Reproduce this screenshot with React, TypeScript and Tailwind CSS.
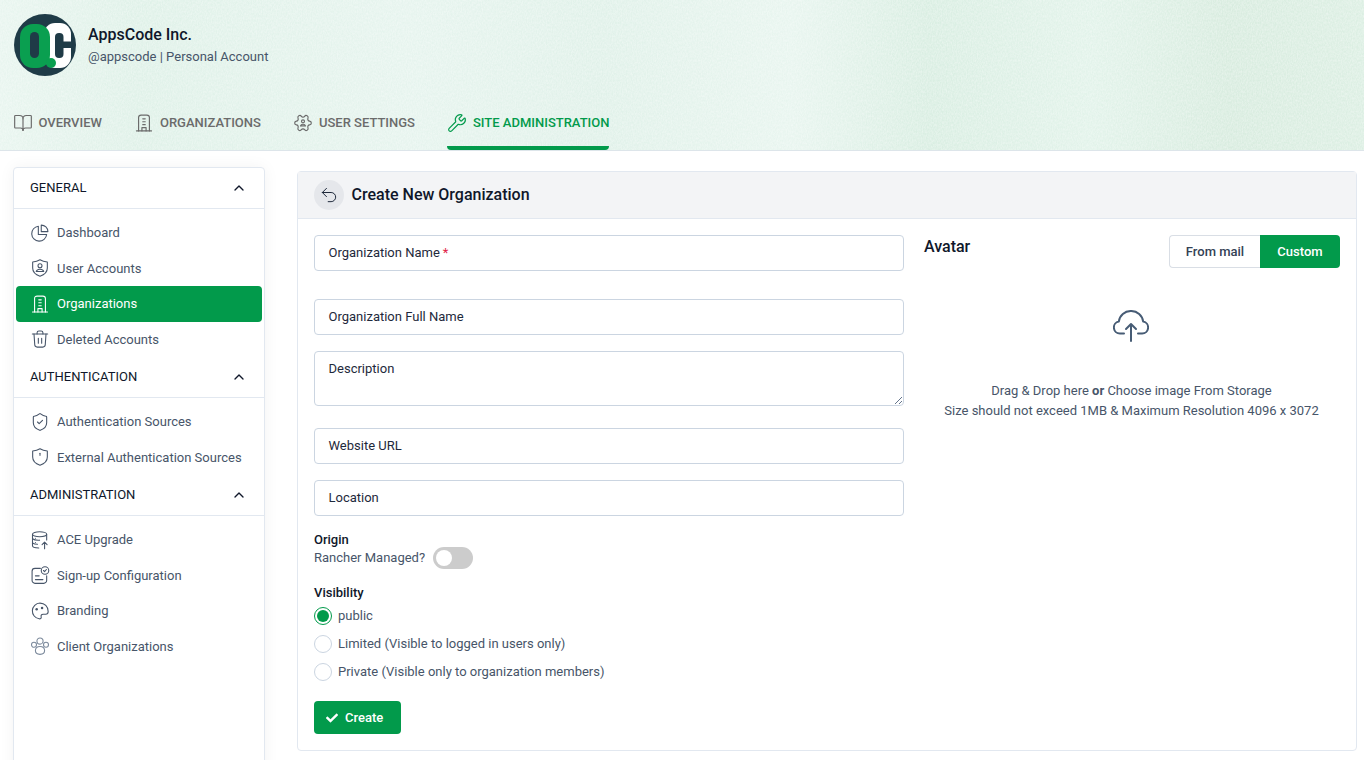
import { BookOpen, ChevronUp, ShieldCheck, Undo2, Wrench } from 'lucide-react';
import { FaCheck } from 'react-icons/fa';
import type { ReactNode } from 'react';

type IconProps = { className?: string; strokeWidth?: number };

function Svg({ className, strokeWidth = 1.5, children }: IconProps & { children: ReactNode }) {
  return (
    <svg viewBox="0 0 24 24" fill="none" stroke="currentColor" strokeWidth={strokeWidth} strokeLinecap="round" strokeLinejoin="round" className={className}>
      {children}
    </svg>
  );
}

function Logo() {
  return (
    <svg viewBox="0 0 62 62" className="h-[62px] w-[62px] shrink-0">
      <circle cx="31" cy="31" r="31" fill="#1f3b47" />
      {/* white C */}
      <rect x="30" y="9" width="27" height="45" rx="11" fill="#fff" />
      <rect x="41" y="27.5" width="16" height="6.5" fill="#1f3b47" />
      <rect x="41" y="19" width="8.5" height="25" rx="4" fill="#1f3b47" />
      {/* green Q */}
      <rect x="6" y="10" width="30" height="44" rx="13" fill="#0a9f50" />
      <circle cx="37" cy="49" r="5" fill="#0a9f50" />
      <rect x="16" y="18" width="9" height="26" rx="4.5" fill="#1f3b47" />
    </svg>
  );
}

function BuildingIcon(props: IconProps) {
  return (
    <Svg {...props}>
      <path d="M5.5 21.5V5.5C5.5 3.5 6.8 2.5 8.5 2.5h7c1.7 0 3 1 3 3v16" />
      <path d="M3 21.5h18" />
      <path d="M9.5 21.5v-4h5v4" />
      <path d="M10.5 7h3M10.5 10.5h3M10.5 14h3" />
    </Svg>
  );
}

function GearUserIcon(props: IconProps) {
  return (
    <Svg {...props}>
      <path
        transform="rotate(90 12 12)"
        d="M9.671 4.136a2.34 2.34 0 0 1 4.659 0 2.34 2.34 0 0 0 3.319 1.915 2.34 2.34 0 0 1 2.33 4.033 2.34 2.34 0 0 0 0 3.831 2.34 2.34 0 0 1-2.33 4.033 2.34 2.34 0 0 0-3.319 1.915 2.34 2.34 0 0 1-4.659 0 2.34 2.34 0 0 0-3.32-1.915 2.34 2.34 0 0 1-2.33-4.033 2.34 2.34 0 0 0 0-3.831A2.34 2.34 0 0 1 6.35 6.051a2.34 2.34 0 0 0 3.32-1.915"
      />
      <circle cx="12" cy="10" r="1.8" />
      <path d="M9 15.5c.4-1.3 1.5-2 3-2s2.6.7 3 2z" />
    </Svg>
  );
}

function PieIcon(props: IconProps) {
  return (
    <Svg {...props}>
      <path d="M10 3.8a9 9 0 1 0 10 10H10z" />
      <path d="M13.5 2.5v7.800h8a8 8 0 0 0-8-7.800z" />
    </Svg>
  );
}

function ShieldUserIcon(props: IconProps) {
  return (
    <Svg {...props}>
      <path d="M12 2.2c2.500 1.500 5.200 2.300 8.800 2.500v7.300c0 4.800-3.600 8.100-8.800 9.800-5.200-1.700-8.800-5-8.800-9.800V4.700c3.600-.2 6.300-1 8.800-2.500z" />
      <circle cx="12" cy="9.3" r="2.4" />
      <path d="M7.5 16.2c.5-1.800 2.400-2.700 4.500-2.700s4 .9 4.500 2.700z" />
    </Svg>
  );
}

function ShieldDotIcon(props: IconProps) {
  return (
    <Svg {...props}>
      <path d="M12 2.2c2.500 1.500 5.200 2.300 8.800 2.500v7.300c0 4.800-3.600 8.100-8.800 9.800-5.200-1.700-8.800-5-8.800-9.800V4.700c3.600-.2 6.300-1 8.800-2.500z" />
      <path d="M12 7.5V10" />
    </Svg>
  );
}

function TrashIcon(props: IconProps) {
  return (
    <Svg {...props}>
      <path d="M2.800 6h18.400" />
      <path d="M8.500 6V4.500c0-1.300.9-2.200 2.200-2.200h2.600c1.300 0 2.200.9 2.200 2.200V6" />
      <path d="M4.800 6l.9 13c.1 1.700 1.300 2.700 2.900 2.700h6.800c1.600 0 2.800-1 2.900-2.700l.9-13" />
      <path d="M10 11v6M14 11v6" />
    </Svg>
  );
}

function DbIcon(props: IconProps) {
  return (
    <Svg {...props}>
      <ellipse cx="11.5" cy="5" rx="8.5" ry="3" />
      <path d="M3 5v14c0 1.500 2.600 2.500 7.500 2.600M20 5v7" />
      <path d="M3 10.500c1.600 1.300 5 1.900 8.500 1.700M3 15.500c1.600 1 3.600 1.500 6 1.500" />
      <path d="M6.500 9.800h.01M6.500 15h.01" />
      <path d="M17.500 22.500v-8M14.500 17.500l3-3 3 3" />
    </Svg>
  );
}

function SignupIcon(props: IconProps) {
  return (
    <Svg {...props}>
      <path d="M12.500 4H6a3.500 3.500 0 0 0-3.500 3.500v11A3.500 3.500 0 0 0 6 22h10.500a3.500 3.500 0 0 0 3.500-3.500V13" />
      <path d="M6.500 13H11M6.500 17.500h9" />
      <circle cx="18" cy="6.5" r="4.5" />
      <path d="M16.200 6.600l1.300 1.300 2.200-2.500" />
    </Svg>
  );
}

function PaletteIcon(props: IconProps) {
  return (
    <Svg {...props}>
      <path d="M12 2.500a9.500 9.500 0 0 0-1 18.900c1.800.2 2.800-.9 2.400-2.400-.5-1.800.6-3.200 2.300-3.200h3.100c1.800 0 3-1.300 3-3.300C21.800 6.800 17.500 2.500 12 2.500z" />
      <circle cx="8" cy="10" r="1.5" fill="currentColor" stroke="none" />
      <circle cx="14.5" cy="8.5" r="1.5" fill="currentColor" stroke="none" />
    </Svg>
  );
}

function PeopleIcon(props: IconProps) {
  return (
    <Svg {...props}>
      <circle cx="12" cy="6" r="3.7" />
      <circle cx="4.8" cy="10.500" r="3" />
      <circle cx="19.2" cy="10.500" r="3" />
      <path d="M6.500 17.500c0-3.500 2.500-5 5.500-5s5.500 1.500 5.500 5-2.500 4.500-5.500 4.500-5.500-1-5.500-4.500z" />
    </Svg>
  );
}

function UploadCloud() {
  return (
    <svg viewBox="0 0 36 32" fill="none" stroke="currentColor" strokeWidth="2" strokeLinecap="round" strokeLinejoin="round" className="-ml-[1px] h-8 w-9 text-[#475c75]">
      <path d="M11 23.500H7a6 6 0 0 1-1.200-11.900A12 12 0 0 1 18 1a12 12 0 0 1 12.200 10.600A6 6 0 0 1 29 23.500H25" />
      <path d="M18 31V14M13 19l5-5 5 5" />
    </svg>
  );
}

const groups = [
  {
    title: 'GENERAL',
    items: [
      { label: 'Dashboard', Icon: PieIcon },
      { label: 'User Accounts', Icon: ShieldUserIcon },
      { label: 'Organizations', Icon: BuildingIcon, active: true },
      { label: 'Deleted Accounts', Icon: TrashIcon },
    ],
  },
  {
    title: 'AUTHENTICATION',
    items: [
      { label: 'Authentication Sources', Icon: ShieldCheck },
      { label: 'External Authentication Sources', Icon: ShieldDotIcon },
    ],
  },
  {
    title: 'ADMINISTRATION',
    items: [
      { label: 'ACE Upgrade', Icon: DbIcon },
      { label: 'Sign-up Configuration', Icon: SignupIcon },
      { label: 'Branding', Icon: PaletteIcon },
      { label: 'Client Organizations', Icon: PeopleIcon, muted: true },
    ],
  },
];

const tabs = [
  { label: 'OVERVIEW', Icon: BookOpen },
  { label: 'ORGANIZATIONS', Icon: BuildingIcon },
  { label: 'USER SETTINGS', Icon: GearUserIcon },
  { label: 'SITE ADMINISTRATION', Icon: Wrench, active: true },
];

function Field({ label, required }: { label: string; required?: boolean }) {
  return (
    <div className="flex h-9 items-center rounded border border-[#cbd5e1] bg-white pl-[13.5px] text-[13px] text-[#1e293b]">
      {label}
      {required && <span className="ml-[3px] text-[#e11d48]">*</span>}
    </div>
  );
}

function Radio({ label, checked }: { label: string; checked?: boolean }) {
  return (
    <div className="flex h-7 items-center gap-[6px] text-[13px] text-[#475569]">
      <span className={`flex h-[18px] w-[18px] items-center justify-center rounded-full border ${checked ? 'border-[#029a4b]' : 'border-[#cbd5e1]'}`}>
        {checked && <span className="h-3 w-3 rounded-full bg-[#029a4b]" />}
      </span>
      {label}
    </div>
  );
}

export default function App() {
  return (
    <div className="h-[760px] w-[1364px] overflow-hidden bg-white font-['Roboto',sans-serif]">
      {/* Header */}
      <header className="relative h-[151px] border-b border-[#dde5ea] bg-[linear-gradient(90deg,#e8f5ef_0%,#dff1e8_10%,#e6f4ee_30%,#e0f1e9_44%,#e8f5ef_58%,#d9eee2_68%,#e2f3ea_80%,#d8ecdf_90%,#dcefe3_100%)]">
        <svg className="absolute inset-0 h-full w-full opacity-[0.4]" aria-hidden="true">
          <filter id="grain">
            <feTurbulence type="fractalNoise" baseFrequency="0.8 0.45" numOctaves="2" />
            <feColorMatrix values="0 0 0 0 1  0 0 0 0 1  0 0 0 0 1  1.6 0 0 0 -0.4" />
          </filter>
          <rect width="100%" height="100%" filter="url(#grain)" />
        </svg>
        <div className="relative flex items-center gap-3 pl-[14px] pt-[14px]">
          <Logo />
          <div>
            <h1 className="text-base leading-[22px] font-medium text-[#0f172a]">AppsCode Inc.</h1>
            <p className="mt-[1px] text-[13px] leading-5 text-[#475569]">@appscode | Personal Account</p>
          </div>
        </div>
        <nav className="absolute bottom-0 left-[12.5px] flex gap-8">
          {tabs.map(({ label, Icon, active }) => (
            <div key={label} className={`flex h-[47px] items-center gap-[6px] border-b-4 pb-1 text-[13px] font-medium ${active ? 'rounded-b-sm border-[#029a4b] text-[#029a4b]' : 'border-transparent text-[#6b6b6b]'}`}>
              <Icon className="h-5 w-5" strokeWidth={1.4} />
              {label}
            </div>
          ))}
        </nav>
      </header>

      <div className="flex items-start gap-8 px-[13px] pt-4">
        {/* Sidebar */}
        <aside className="h-[640px] w-[252px] shrink-0 rounded border border-[#e2e8f0] bg-white shadow-[0_0_16px_rgba(15,23,42,0.05)]">
          {groups.map((group) => (
            <div key={group.title}>
              <div className="flex h-[41px] items-center justify-between border-b border-[#e2e8f0] pb-[1px] pl-4 pr-[17px] text-[13px] text-[#0f172a]">
                {group.title}
                <ChevronUp className="h-4 w-4" strokeWidth={2} />
              </div>
              <ul className="px-[2px] pt-[6px]">
                {group.items.map(({ label, Icon, active, muted }) => (
                  <li key={label} className={`flex h-[35.5px] items-center gap-[7px] rounded pl-[14px] text-[13px] ${active ? 'bg-[#029a4b] text-white' : 'text-[#475569]'}`}>
                    <Icon className={`h-5 w-5 ${muted ? 'text-[#7c8a9c]' : ''}`} strokeWidth={1.3} />
                    {label}
                  </li>
                ))}
              </ul>
            </div>
          ))}
        </aside>

        {/* Main card */}
        <main className="mt-1 h-[580px] w-[1060px] rounded border border-[#e2e8f0] bg-white">
          <div className="flex h-[47px] items-center gap-[7.5px] border-b border-[#e2e8f0] bg-[#f3f4f6] pl-4">
            <span className="flex h-[30px] w-[30px] items-center justify-center rounded-full bg-[#e5e7eb] text-[#1e293b]">
              <Undo2 className="h-5 w-5" strokeWidth={1.2} />
            </span>
            <h2 className="text-base font-medium text-[#0f172a]">Create New Organization</h2>
          </div>
          <div className="grid grid-cols-[590px_416px] gap-5 p-4">
            <div>
              <Field label="Organization Name" required />
              <div className="mt-7">
                <Field label="Organization Full Name" />
              </div>
              <div className="relative mt-4 h-[55px] rounded border border-[#cbd5e1] pl-[13.5px] pt-[7px] text-[13px] text-[#1e293b]">
                Description
                <svg viewBox="0 0 8 8" className="absolute bottom-[1px] right-[1px] h-2 w-2 text-[#64748b]" stroke="currentColor">
                  <path d="M1 8l7-7M5 8l3-3" />
                </svg>
              </div>
              <div className="mt-[22px]">
                <Field label="Website URL" />
              </div>
              <div className="mt-4">
                <Field label="Location" />
              </div>
              <p className="mt-4 text-[13px] leading-4 font-medium text-[#0f172a]">Origin</p>
              <div className="-mt-[1px] flex items-center gap-2 text-[13px] text-[#475569]">
                Rancher Managed?
                <span className="flex h-[22px] w-10 items-center rounded-full bg-[#cccccc] pl-[3px]">
                  <span className="h-4 w-4 rounded-full bg-white" />
                </span>
              </div>
              <p className="mt-4 text-[13px] leading-4 font-medium text-[#0f172a]">Visibility</p>
              <div className="mt-[1px]">
                <Radio label="public" checked />
                <Radio label="Limited (Visible to logged in users only)" />
                <Radio label="Private (Visible only to organization members)" />
              </div>
              <button className="mt-[15px] flex h-[33px] w-[87px] items-center gap-[7px] rounded bg-[#029a4b] pl-3 text-[13px] font-medium text-white">
                <FaCheck className="h-3 w-3" />
                Create
              </button>
            </div>

            <div>
              <div className="flex items-start justify-between">
                <h3 className="pt-[1px] text-base leading-[22px] font-medium text-[#0f172a]">Avatar</h3>
                <div className="flex h-[33px] text-[13px] font-medium">
                  <span className="flex w-[91px] items-center justify-center rounded-l border border-r-0 border-[#d9dee5] text-[#334155]">From mail</span>
                  <span className="flex w-[80px] items-center justify-center rounded-r bg-[#029a4b] text-white">Custom</span>
                </div>
              </div>
              <div className="mt-[42px] flex flex-col items-center pr-[1px] text-[13px] leading-5 text-[#475569]">
                <UploadCloud />
                <p className="mt-[39px]">
                  Drag &amp; Drop here <b className="font-bold">or</b> Choose image From Storage
                </p>
                <p>Size should not exceed 1MB &amp; Maximum Resolution 4096 x 3072</p>
              </div>
            </div>
          </div>
        </main>
      </div>
    </div>
  );
}
